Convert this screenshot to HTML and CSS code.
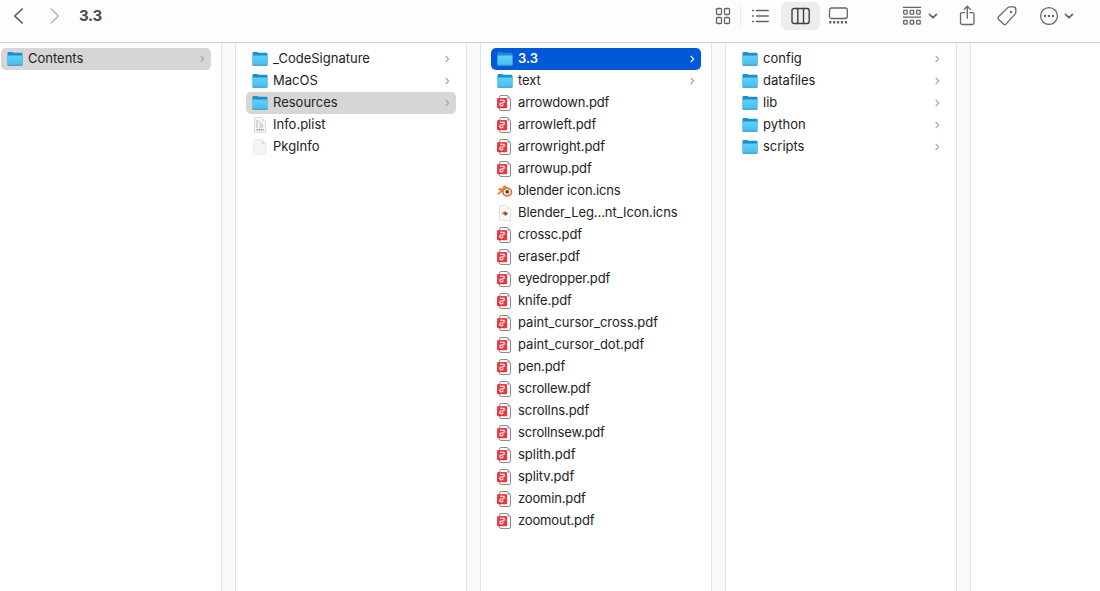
FILE: index.html
```
<!DOCTYPE html>
<html lang="en">
<head>
<meta charset="utf-8">
<title>3.3</title>
<link rel="stylesheet" href="styles.css">
</head>
<body>
<svg class="sprite" aria-hidden="true">
  <defs>
    <linearGradient id="folder-front" x1="0" y1="0" x2="0" y2="1"><stop offset="0" stop-color="#5fd0fb"/><stop offset="1" stop-color="#44bdf1"/></linearGradient>
    <linearGradient id="pdf-red" x1="0" y1="0" x2="0" y2="1"><stop offset="0" stop-color="#e5484c"/><stop offset="1" stop-color="#f02f36"/></linearGradient>
  </defs>
  <symbol id="folder" viewBox="0 0 16 16">
    <path d="M.5 2Q.5 1 1.500 1H5.100Q5.700 1 6.100 1.400L6.600 1.800H14.500Q15.500 1.800 15.500 2.800V6H.5Z" fill="#1b8fc9"/>
    <path d="M.5 4.500H15.500V13.600Q15.500 14.600 14.500 14.600H1.500Q.5 14.600 .5 13.600Z" fill="url(#folder-front)"/>
    <path d="M.6 14.300H15.400" stroke="#3c91b8" stroke-width=".9"/>
    <path d="M.5 4.500V14M15.500 4.500V14" stroke="#4aa9d3" stroke-width=".5"/>
  </symbol>
  <symbol id="pdf" viewBox="0 0 16 16">
    <path d="M2.500 2.800V2.200Q2.500 .5 4 .5H10.300L13.500 3.700V13.800Q13.500 15.500 12 15.500H4Q2.500 15.500 2.500 13.800V13" fill="#fff" stroke="#8b8b8b"/>
    <path d="M10.300 .5V2.700Q10.300 3.700 11.300 3.700H13.500Z" fill="#aaa"/>
    <rect x="0" y="3" width="10.200" height="10.200" rx="1.200" fill="url(#pdf-red)"/>
    <path d="M3.600 5.200H5.700Q7.400 5.200 7.300 6.600Q7.200 7.700 5.500 8H4.200Q2.800 8.100 2.900 9.500Q3 10.900 4.600 10.900Q5.900 10.900 6 9.700" fill="none" stroke="#fff" stroke-width="1.150" stroke-linecap="round"/>
  </symbol>
  <symbol id="blender" viewBox="0 0 16 16">
    <path d="M.8 11.100L6.300 6.800H2.200V5.900H8L6.500 4.100L7.700 3.100L13.600 7.500" fill="none" stroke="#ef7a2e" stroke-width="1.500" stroke-linejoin="round"/>
    <ellipse cx="10.200" cy="9.100" rx="4.300" ry="3.800" fill="#fff" stroke="#ef752b" stroke-width="1.800"/>
    <ellipse cx="10.200" cy="8.900" rx="2" ry="1.800" fill="#175489"/>
  </symbol>
  <symbol id="icns-doc" viewBox="0 0 16 16">
    <path d="M2.500 .7H10L13.600 4.300V15.300H2.500Z" fill="#fdfdfd" stroke="#d6d6d6" stroke-width=".8"/>
    <path d="M10 .7V4.300H13.600Z" fill="#e5e5e5"/>
    <path d="M4.600 9.200L6.800 7.300H5.400M7 6.300L9.800 7.900" fill="none" stroke="#ee7a35" stroke-width=".9"/>
    <ellipse cx="8.500" cy="8.600" rx="1.900" ry="1.600" fill="#375c80" stroke="#ed742b" stroke-width="1"/>
  </symbol>
  <symbol id="plist" viewBox="0 0 16 16">
    <path d="M2.500 .7H10L13.600 4.300V15.300H2.500Z" fill="#f7f7f7" stroke="#cfcfcf" stroke-width=".8"/>
    <path d="M10 .7V4.300H13.600Z" fill="#ddd"/>
    <path d="M4 4H7M4 6H6M4 8H6M4 10H6M7.500 6H9.500M7.500 8H11M7.500 10H11" stroke="#b5b5b5" stroke-width="1"/>
    <path d="M4.500 12.700H11.800" stroke="#999" stroke-width="1.400" stroke-dasharray="1.500 .5"/>
  </symbol>
  <symbol id="blank" viewBox="0 0 16 16">
    <path d="M1.800 .8H9.600L13.900 5V15.200H1.800Z" fill="#f5f5f5" stroke="#e1e1e1" stroke-width=".7"/>
    <path d="M9.600 .8V5H13.900Z" fill="#ddd"/>
  </symbol>
  <symbol id="chev" viewBox="0 0 6 10"><path d="M1.700 1.900L4.600 5L1.700 8.100" fill="none" stroke="currentColor" stroke-width="1.150"/></symbol>
  <symbol id="down" viewBox="0 0 10 8"><path d="M1.500 2.300L5 5.600L8.500 2.300" fill="none" stroke="currentColor" stroke-width="1.700" stroke-linecap="round" stroke-linejoin="round"/></symbol>
</svg>

<header class="toolbar">
  <svg class="nav-back" viewBox="0 0 12 18"><path d="M10.300 2L2.700 9L10.300 16" /></svg>
  <svg class="nav-forward" viewBox="0 0 12 18"><path d="M2.200 2L9.300 9L2.200 16" /></svg>
  <h1 class="title">3.3</h1>
  <div class="views">
    <svg class="icon icon-grid" viewBox="0 0 16 18"><rect x="1.500" y="1.500" width="5" height="6" rx="1"/><rect x="9.500" y="1.500" width="5" height="6" rx="1"/><rect x="1.500" y="10.500" width="5" height="6" rx="1"/><rect x="9.500" y="10.500" width="5" height="6" rx="1"/></svg>
    <span class="divider"></span>
    <svg class="icon icon-list" viewBox="0 0 18 16"><path d="M4.500 2.500H16.300M4.500 8H16.300M4.500 13.500H16.300M.3 2.500H1.300M.3 8H1.300M.3 13.500H1.300"/></svg>
    <span class="view-active"><svg class="icon icon-columns" viewBox="0 0 20 18"><rect x="1" y="1.500" width="17.200" height="15" rx="2"/><path d="M6.800 1.500V16.500M12.500 1.500V16.500"/></svg></span>
    <svg class="icon icon-gallery" viewBox="0 0 20 18"><rect x="1.500" y="1" width="17.800" height="10.500" rx="2"/><path class="dots" d="M1.200 15.300H19.700"/></svg>
  </div>
  <div class="actions">
    <svg class="icon icon-group" viewBox="0 0 18 20"><path d="M0 1.300H18M0 11.100H18"/><rect x=".7" y="4.400" width="3.500" height="3.700" rx=".7"/><rect x="7.200" y="4.400" width="3.500" height="3.700" rx=".7"/><rect x="13.700" y="4.400" width="3.500" height="3.700" rx=".7"/><rect x=".7" y="14.400" width="3.500" height="3.700" rx=".7"/><rect x="7.200" y="14.400" width="3.500" height="3.700" rx=".7"/><rect x="13.700" y="14.400" width="3.500" height="3.700" rx=".7"/></svg>
    <svg class="caret"><use href="#down"/></svg>
    <svg class="icon icon-share" viewBox="0 0 16 22"><path d="M5.500 7.600H3.300Q1.500 7.600 1.500 9.400V17.700Q1.500 19.500 3.300 19.500H13.200Q15 19.500 15 17.700V9.400Q15 7.600 13.200 7.600H11M8.300 13.200V1.500M5.300 4.400L8.300 1.300L11.300 4.400"/></svg>
    <svg class="icon icon-tag" viewBox="0 0 20 20"><path d="M10.800 1.600Q11.500 .9 12.500 .9H16.200Q18.800 1 18.800 3.500V6.300Q18.800 7.300 18.100 8.100L8.900 18.100Q7.700 19.300 6.500 18.100L1.500 13.200Q.3 12 1.500 10.800Z"/><circle class="solid" cx="14" cy="6" r="1.200"/></svg>
    <svg class="icon icon-more" viewBox="0 0 20 20"><circle cx="10" cy="10" r="8.400"/><g class="solid"><circle cx="6" cy="10" r="1.200"/><circle cx="10" cy="10" r="1.200"/><circle cx="14" cy="10" r="1.200"/></g></svg>
    <svg class="caret"><use href="#down"/></svg>
  </div>
</header>

<main class="browser">
  <ul class="column first">
    <li class="row selected"><svg class="file"><use href="#folder"/></svg><span class="name">Contents</span><svg class="chevron"><use href="#chev"/></svg></li>
  </ul>
  <div class="gutter"></div>
  <ul class="column">
    <li class="row"><svg class="file"><use href="#folder"/></svg><span class="name">_CodeSignature</span><svg class="chevron"><use href="#chev"/></svg></li>
    <li class="row"><svg class="file"><use href="#folder"/></svg><span class="name">MacOS</span><svg class="chevron"><use href="#chev"/></svg></li>
    <li class="row selected"><svg class="file"><use href="#folder"/></svg><span class="name">Resources</span><svg class="chevron"><use href="#chev"/></svg></li>
    <li class="row"><svg class="file"><use href="#plist"/></svg><span class="name">Info.plist</span></li>
    <li class="row"><svg class="file"><use href="#blank"/></svg><span class="name">PkgInfo</span></li>
  </ul>
  <div class="gutter"></div>
  <ul class="column files">
    <li class="row focused"><svg class="file"><use href="#folder"/></svg><span class="name">3.3</span><svg class="chevron"><use href="#chev"/></svg></li>
    <li class="row"><svg class="file"><use href="#folder"/></svg><span class="name">text</span><svg class="chevron"><use href="#chev"/></svg></li>
    <li class="row"><svg class="file"><use href="#pdf"/></svg><span class="name tight">arrowdown.pdf</span></li>
    <li class="row"><svg class="file"><use href="#pdf"/></svg><span class="name">arrowleft.pdf</span></li>
    <li class="row"><svg class="file"><use href="#pdf"/></svg><span class="name">arrowright.pdf</span></li>
    <li class="row"><svg class="file"><use href="#pdf"/></svg><span class="name tight">arrowup.pdf</span></li>
    <li class="row"><svg class="file"><use href="#blender"/></svg><span class="name tight">blender icon.icns</span></li>
    <li class="row"><svg class="file"><use href="#icns-doc"/></svg><span class="name">Blender_Leg...nt_Icon.icns</span></li>
    <li class="row"><svg class="file"><use href="#pdf"/></svg><span class="name tight">crossc.pdf</span></li>
    <li class="row"><svg class="file"><use href="#pdf"/></svg><span class="name">eraser.pdf</span></li>
    <li class="row"><svg class="file"><use href="#pdf"/></svg><span class="name tight">eyedropper.pdf</span></li>
    <li class="row"><svg class="file"><use href="#pdf"/></svg><span class="name">knife.pdf</span></li>
    <li class="row"><svg class="file"><use href="#pdf"/></svg><span class="name loose">paint_cursor_cross.pdf</span></li>
    <li class="row"><svg class="file"><use href="#pdf"/></svg><span class="name loose">paint_cursor_dot.pdf</span></li>
    <li class="row"><svg class="file"><use href="#pdf"/></svg><span class="name">pen.pdf</span></li>
    <li class="row"><svg class="file"><use href="#pdf"/></svg><span class="name tight">scrollew.pdf</span></li>
    <li class="row"><svg class="file"><use href="#pdf"/></svg><span class="name">scrollns.pdf</span></li>
    <li class="row"><svg class="file"><use href="#pdf"/></svg><span class="name tight">scrollnsew.pdf</span></li>
    <li class="row"><svg class="file"><use href="#pdf"/></svg><span class="name loose">splith.pdf</span></li>
    <li class="row"><svg class="file"><use href="#pdf"/></svg><span class="name">splitv.pdf</span></li>
    <li class="row"><svg class="file"><use href="#pdf"/></svg><span class="name tight">zoomin.pdf</span></li>
    <li class="row"><svg class="file"><use href="#pdf"/></svg><span class="name tight">zoomout.pdf</span></li>
  </ul>
  <div class="gutter"></div>
  <ul class="column">
    <li class="row"><svg class="file"><use href="#folder"/></svg><span class="name">config</span><svg class="chevron"><use href="#chev"/></svg></li>
    <li class="row"><svg class="file"><use href="#folder"/></svg><span class="name">datafiles</span><svg class="chevron"><use href="#chev"/></svg></li>
    <li class="row"><svg class="file"><use href="#folder"/></svg><span class="name">lib</span><svg class="chevron"><use href="#chev"/></svg></li>
    <li class="row"><svg class="file"><use href="#folder"/></svg><span class="name">python</span><svg class="chevron"><use href="#chev"/></svg></li>
    <li class="row"><svg class="file"><use href="#folder"/></svg><span class="name">scripts</span><svg class="chevron"><use href="#chev"/></svg></li>
  </ul>
  <div class="gutter"></div>
  <div class="column last"></div>
</main>
</body>
</html>
```

FILE: styles.css
```
* { box-sizing: border-box; }
body {
  margin: 0;
  height: 591px;
  display: flex;
  flex-direction: column;
  overflow: hidden;
  background: #fff;
  color: #222;
  font: 13px/22px Inter, "Liberation Sans", sans-serif;
}
svg { display: block; flex: none; }
.sprite { width: 0; height: 0; }

.toolbar {
  flex: none;
  height: 43px;
  display: flex;
  align-items: flex-start;
  background: #fdfdfd;
  border-bottom: 1px solid #cfcfcf;
  color: #626262;
}
.nav-back, .nav-forward {
  width: 12px;
  height: 18px;
  margin: 7px 0 0 12px;
  fill: none;
  stroke: #555;
  stroke-width: 1.6;
  stroke-linecap: round;
  stroke-linejoin: round;
}
.nav-forward { margin-left: 25px; stroke: #b5b5b5; }
.title {
  width: 100px;
  margin: 5px 0 0 18px;
  font-size: 15px;
  line-height: 22px;
  font-weight: 700;
  letter-spacing: -0.3px;
  color: #4b4b4b;
}
.views {
  display: flex;
  height: 28px;
  margin: 2px 0 0 536px;
  align-items: center;
}
.icon { fill: none; stroke: #666; stroke-width: 1.3; stroke-linecap: round; stroke-linejoin: round; }
.icon .solid { fill: #666; stroke: none; }
.icon-grid { width: 16px; height: 18px; }
.divider { width: 1px; height: 20px; margin: 0 11px 0 9px; background: #e8e8e8; }
.icon-list { width: 18px; height: 16px; stroke-width: 1.4; }
.view-active {
  width: 39px;
  height: 28px;
  display: flex;
  align-items: center;
  justify-content: center;
  margin: 0 8px 0 11px;
  border-radius: 6px;
  background: #ededed;
}
.icon-columns { width: 20px; height: 18px; stroke: #3f3f3f; stroke-width: 1.4; }
.icon-gallery { width: 20px; height: 18px; }
.dots { stroke-width: 2.4; stroke-dasharray: 2.2 1.7; stroke-linecap: butt; }
.actions { display: flex; height: 28px; margin: 2px 0 0 55px; align-items: center; }
.caret { width: 10px; height: 8px; margin-left: 7px; }
.icon-group { width: 18px; height: 20px; stroke-linecap: butt; }
.icon-share { width: 16px; height: 22px; margin-left: 21px; }
.icon-tag { width: 20px; height: 20px; margin-left: 22px; }
.icon-more { width: 20px; height: 20px; margin-left: 22px; }
.icon-more + .caret { margin-left: 5px; }

.browser { flex: 1; min-height: 0; display: flex; }
.column {
  flex: none;
  width: 230px;
  margin: 0;
  padding: 5px 10px 0;
  list-style: none;
}
.first { width: 221px; padding-left: 1px; }
.last { flex: 1; width: auto; }
.gutter {
  flex: none;
  width: 15px;
  background: #f9f9f9;
  border: solid #e3e3e3;
  border-width: 0 1px;
}
.row {
  display: flex;
  align-items: center;
  height: 22px;
  padding: 0 6px;
  border-radius: 5px;
}
.selected { background: #d6d6d6; }
.focused { background: #0059d8; color: #fff; font-weight: 600; }
.file { width: 16px; height: 16px; }
.name { flex: 1; margin-left: 5px; padding-bottom: 2px; white-space: nowrap; }
.files .name { letter-spacing: -0.07px; }
.files .tight { letter-spacing: -0.17px; }
.files .loose { letter-spacing: 0; }
.chevron { width: 6px; height: 10px; color: #a3a3a3; }
.focused .chevron { color: #fff; }
```
